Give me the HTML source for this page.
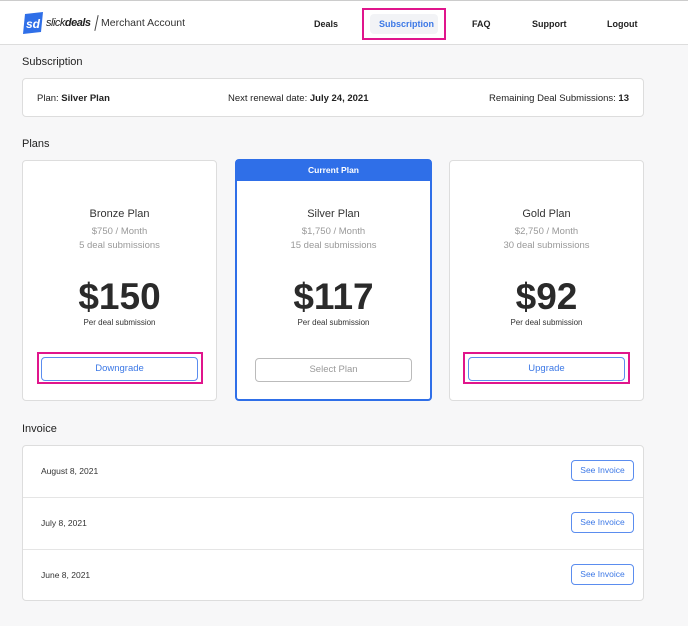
<!DOCTYPE html><html><head><style>
*{box-sizing:border-box;margin:0;padding:0}
body{width:688px;height:626px;background:#f7f7f8;font-family:"Liberation Sans",sans-serif;color:#222;position:relative;overflow:hidden}
.a{position:absolute}
.hdr{left:0;top:0;width:688px;height:45px;background:#fff;border-bottom:1px solid #ddd;border-top:1px solid #ccc}
.nav{font-size:9px;font-weight:bold;top:18px}
.box{background:#fff;border:1px solid #ddd;border-radius:4px}
h2{font-size:11px;font-weight:normal;position:absolute}
.card{text-align:center}
.t{font-size:11px;color:#333}
.g{font-size:9.5px;color:#999;line-height:14px}
.p{font-size:37px;font-weight:bold;color:#2a2a2a;letter-spacing:0}
.s{font-size:8px;color:#333}
.btn{position:absolute;border:1px solid #5b8def;border-radius:4px;color:#3c78e6;font-size:9.5px;text-align:center;background:#fff}
.pink{position:absolute;border:2px solid #e0158c}
.row{position:absolute;left:0;width:620px;height:52px;border-bottom:1px solid #e5e5e5;font-size:8.5px}
.row span{position:absolute;left:18px;top:20px;color:#333}
.row .btn{left:548px;top:14px;width:63px;height:21px;line-height:19px;font-size:8.5px}
</style></head><body>
<div class="a hdr">
 <svg class="a" style="left:22px;top:11px" width="22" height="22" viewBox="0 0 22 22"><path d="M3 2 L21 0 L19 20 L1 22 Z" fill="#2f6fe8"/><text x="4" y="16" font-size="12" font-weight="bold" font-style="italic" fill="#fff" font-family="Liberation Sans">sd</text></svg>
 <div class="a" style="left:46px;top:16px;font-size:11px;font-style:italic;letter-spacing:-0.5px">slick<b>deals</b></div>
 <div class="a" style="left:96px;top:14px;width:1px;height:16px;background:#444;transform:rotate(12deg)"></div>
 <div class="a" style="left:101px;top:16px;font-size:10.5px;color:#333">Merchant Account</div>
 <div class="a nav" style="left:314px">Deals</div>
 <div class="a" style="left:370px;top:13px;width:68px;height:20px;background:#f2f3f6;border-radius:4px"></div>
 <div class="a nav" style="left:379px;color:#3c78e6">Subscription</div>
 <div class="pink" style="left:362px;top:7px;width:84px;height:32px"></div>
 <div class="a nav" style="left:472px">FAQ</div>
 <div class="a nav" style="left:532px">Support</div>
 <div class="a nav" style="left:607px">Logout</div>
</div>
<h2 style="left:22px;top:56px">Subscription</h2>
<div class="a box" style="left:22px;top:78px;width:622px;height:39px;font-size:9.5px">
 <div class="a" style="left:14px;top:14px">Plan: <b>Silver Plan</b></div>
 <div class="a" style="left:205px;top:14px">Next renewal date: <b>July 24, 2021</b></div>
 <div class="a" style="right:14px;top:14px">Remaining Deal Submissions: <b>13</b></div>
</div>
<h2 style="left:22px;top:138px">Plans</h2>

<div class="a box card" style="left:22px;top:160px;width:195px;height:241px">
 <div class="t" style="margin-top:47px">Bronze Plan</div>
 <div class="g" style="margin-top:5px">$750 / Month<br>5 deal submissions</div>
 <div class="p" style="margin-top:23px">$150</div>
 <div class="s" style="margin-top:0px">Per deal submission</div>
 <div class="btn" style="left:18px;top:196px;width:157px;height:24px;line-height:22px">Downgrade</div>
</div>
<div class="pink" style="left:37px;top:352px;width:166px;height:32px"></div>

<div class="a box card" style="left:235px;top:159px;width:197px;height:242px;border:2px solid #2f6fe8">
 <div style="background:#2f6fe8;color:#fff;font-size:8.5px;font-weight:bold;height:21px;line-height:21px;margin:-1px -1px 0">Current Plan</div>
 <div class="t" style="margin-top:27px">Silver Plan</div>
 <div class="g" style="margin-top:5px">$1,750 / Month<br>15 deal submissions</div>
 <div class="p" style="margin-top:23px">$117</div>
 <div class="s" style="margin-top:0px">Per deal submission</div>
 <div class="btn" style="left:18px;top:197px;width:157px;height:24px;line-height:22px;border-color:#bbb;color:#999">Select Plan</div>
</div>

<div class="a box card" style="left:449px;top:160px;width:195px;height:241px">
 <div class="t" style="margin-top:47px">Gold Plan</div>
 <div class="g" style="margin-top:5px">$2,750 / Month<br>30 deal submissions</div>
 <div class="p" style="margin-top:23px">$92</div>
 <div class="s" style="margin-top:0px">Per deal submission</div>
 <div class="btn" style="left:18px;top:196px;width:157px;height:24px;line-height:22px">Upgrade</div>
</div>
<div class="pink" style="left:463px;top:352px;width:167px;height:32px"></div>

<h2 style="left:22px;top:423px">Invoice</h2>
<div class="a box" style="left:22px;top:445px;width:622px;height:156px">
 <div class="row" style="top:0"><span>August 8, 2021</span><div class="btn">See Invoice</div></div>
 <div class="row" style="top:52px"><span>July 8, 2021</span><div class="btn">See Invoice</div></div>
 <div class="row" style="top:104px;border:none"><span>June 8, 2021</span><div class="btn">See Invoice</div></div>
</div>
</body></html>
